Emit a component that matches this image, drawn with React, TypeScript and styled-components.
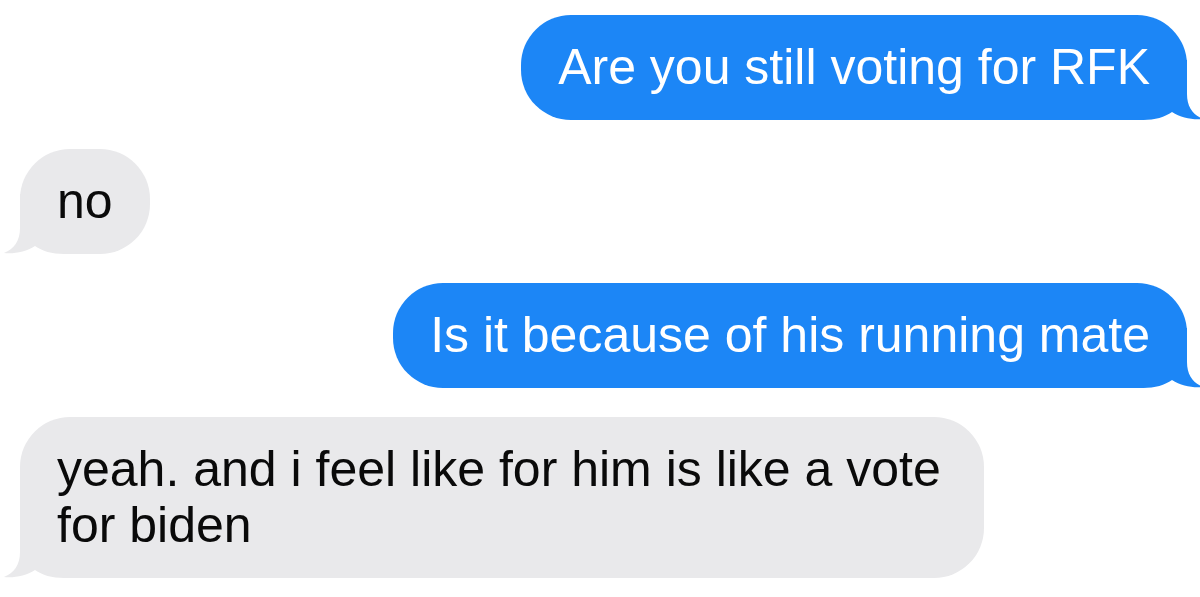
import React from "react";
import styled, { createGlobalStyle } from "styled-components";

const GlobalStyle = createGlobalStyle`
  html, body {
    margin: 0;
    padding: 0;
    background: #ffffff;
    overflow: hidden;
  }
  body {
    font-family: "Liberation Sans", Arial, sans-serif;
  }
`;

const BLUE = "#1c86f6";
const GRAY = "#e9e9eb";

interface Message {
  text: string;
  mine: boolean;
}

const messages: Message[] = [
  { text: "Are you still voting for RFK", mine: true },
  { text: "no", mine: false },
  { text: "Is it because of his running mate", mine: true },
  { text: "yeah. and i feel like for him is like a vote for biden", mine: false },
];

const Thread = styled.div`
  display: flex;
  flex-direction: column;
  gap: 29px;
  padding: 15px 13px 0 20px;
  width: 1200px;
  box-sizing: border-box;
`;

const Row = styled.div<{ $mine: boolean }>`
  display: flex;
  justify-content: ${(p) => (p.$mine ? "flex-end" : "flex-start")};
`;

const Bubble = styled.div<{ $mine: boolean }>`
  position: relative;
  box-sizing: border-box;
  max-width: 964px;
  padding: 24px 37px 25px 37px;
  border-radius: 50px;
  background: ${(p) => (p.$mine ? BLUE : GRAY)};
  color: ${(p) => (p.$mine ? "#ffffff" : "#0a0a0a")};
  font-size: 50px;
  line-height: 56px;
`;

const BubbleText = styled.span`
  position: relative;
  z-index: 1;
`;

const Tail = styled.svg<{ $mine: boolean }>`
  position: absolute;
  bottom: 0;
  width: 80px;
  height: 60px;
  ${(p) => (p.$mine ? "right: -20px;" : "left: -20px; transform: scaleX(-1);")}
  fill: ${(p) => (p.$mine ? BLUE : GRAY)};
  pointer-events: none;
  z-index: 0;
`;

// tail drawn for the right side; the bubble corner sits at (60, 60)
const BubbleTail: React.FC<{ mine: boolean }> = ({ mine }) => (
  <Tail $mine={mine} viewBox="0 0 80 60">
    <path d="M 0 0 L 60 0 L 60 34 C 60 47 66 55 76 59 C 66 60 54 58 45 52 C 38 57 28 60 16 60 L 0 60 Z" />
  </Tail>
);

export default function App() {
  return (
    <>
      <GlobalStyle />
      <Thread>
        {messages.map((m, i) => (
          <Row key={i} $mine={m.mine}>
            <Bubble $mine={m.mine}>
              <BubbleTail mine={m.mine} />
              <BubbleText>{m.text}</BubbleText>
            </Bubble>
          </Row>
        ))}
      </Thread>
    </>
  );
}
